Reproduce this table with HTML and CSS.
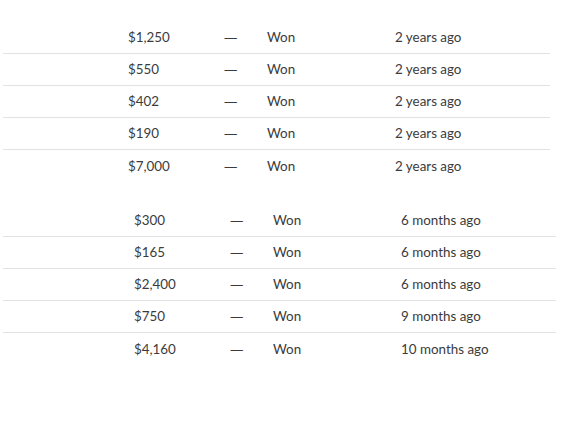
FILE: index.html
```html
<!DOCTYPE html>
<html>
<head>
<meta charset="utf-8">
<link rel="stylesheet" href="styles.css">
</head>
<body>
<div class="page">
  <div class="table t1">
    <div class="row"><span></span><span>$1,250</span><span class="dash">—</span><span>Won</span><span>2 years ago</span></div>
    <div class="row"><span></span><span>$550</span><span class="dash">—</span><span>Won</span><span>2 years ago</span></div>
    <div class="row"><span></span><span>$402</span><span class="dash">—</span><span>Won</span><span>2 years ago</span></div>
    <div class="row"><span></span><span>$190</span><span class="dash">—</span><span>Won</span><span>2 years ago</span></div>
    <div class="row"><span></span><span>$7,000</span><span class="dash">—</span><span>Won</span><span>2 years ago</span></div>
  </div>
  <div class="table t2">
    <div class="row"><span></span><span>$300</span><span class="dash">—</span><span>Won</span><span>6 months ago</span></div>
    <div class="row"><span></span><span>$165</span><span class="dash">—</span><span>Won</span><span>6 months ago</span></div>
    <div class="row"><span></span><span>$2,400</span><span class="dash">—</span><span>Won</span><span>6 months ago</span></div>
    <div class="row"><span></span><span>$750</span><span class="dash">—</span><span>Won</span><span>9 months ago</span></div>
    <div class="row"><span></span><span>$4,160</span><span class="dash">—</span><span>Won</span><span>10 months ago</span></div>
  </div>
</div>
</body>
</html>
```
FILE: styles.css
```css
html, body {
  margin: 0;
  padding: 0;
  background: #ffffff;
}
.page {
  padding: 22px 0 0 3px;
  font-family: Lato, "Open Sans", sans-serif;
  font-size: 13.4px;
  color: #3b3b3b;
}
.table {
  display: flex;
  flex-direction: column;
}
.t1 {
  width: 547px;
}
.t2 {
  width: 553px;
  margin-top: 23px;
}
.row {
  display: grid;
  height: 32px;
  padding-bottom: 1px;
  align-items: center;
  border-bottom: 1px solid #e2e2e2;
  box-sizing: border-box;
  line-height: 16px;
}
.row:last-child {
  border-bottom: none;
}
.t1 .row {
  grid-template-columns: 125px 96px 43px 128px 1fr;
}
.t2 .row {
  grid-template-columns: 131px 96px 43px 128px 1fr;
}
.dash {
  font-family: "Open Sans", sans-serif;
}
```
